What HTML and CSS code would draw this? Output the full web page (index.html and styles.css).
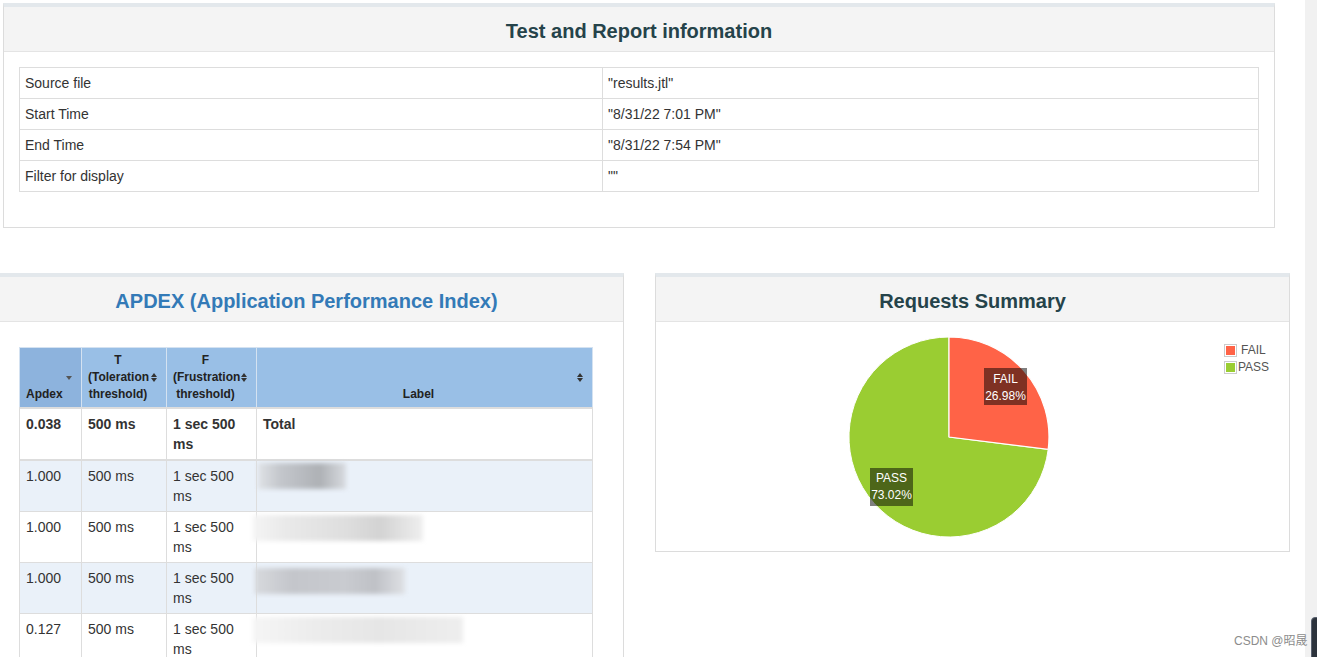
FILE: index.html
```html
<!DOCTYPE html>
<html>
<head>
<meta charset="utf-8">
<title>Dashboard</title>
<link rel="stylesheet" href="styles.css">
</head>
<body>
<div class="page">
  <div class="content">
    <section class="panel info-panel">
      <div class="panel-heading"><h2 class="title">Test and Report information</h2></div>
      <div class="panel-body info-body">
        <table class="info">
          <colgroup><col class="c-key"><col></colgroup>
          <tr><td>Source file</td><td>"results.jtl"</td></tr>
          <tr><td>Start Time</td><td>"8/31/22 7:01 PM"</td></tr>
          <tr><td>End Time</td><td>"8/31/22 7:54 PM"</td></tr>
          <tr><td>Filter for display</td><td>""</td></tr>
        </table>
      </div>
    </section>

    <div class="row">
      <section class="panel half">
        <div class="panel-heading"><h2 class="title title-link">APDEX (Application Performance Index)</h2></div>
        <div class="panel-body apdex-body">
          <table class="apdex">
            <colgroup><col class="c1"><col class="c2"><col class="c3"><col class="c4"></colgroup>
            <thead>
              <tr>
                <th class="sorted">Apdex<span class="sort-desc"></span></th>
                <th>T<br>(Toleration<br>threshold)<span class="sort-both"></span></th>
                <th>F<br>(Frustration<br>threshold)<span class="sort-both"></span></th>
                <th>Label<span class="sort-both"></span></th>
              </tr>
            </thead>
            <tbody class="total">
              <tr><td>0.038</td><td>500 ms</td><td>1 sec 500 ms</td><td>Total</td></tr>
            </tbody>
            <tbody class="rows">
              <tr class="odd"><td>1.000</td><td>500 ms</td><td>1 sec 500 ms</td><td><div class="smear s1"></div></td></tr>
              <tr><td>1.000</td><td>500 ms</td><td>1 sec 500 ms</td><td><div class="smear s2"></div></td></tr>
              <tr class="odd"><td>1.000</td><td>500 ms</td><td>1 sec 500 ms</td><td><div class="smear s3"></div></td></tr>
              <tr><td>0.127</td><td>500 ms</td><td>1 sec 500 ms</td><td><div class="smear s4"></div></td></tr>
            </tbody>
          </table>
        </div>
      </section>

      <section class="panel half">
        <div class="panel-heading"><h2 class="title">Requests Summary</h2></div>
        <div class="panel-body chart-body">
          <svg class="pie" width="633" height="229" viewBox="0 0 633 229" xmlns="http://www.w3.org/2000/svg">
            <path d="M293,115 L392.2,127.4 A100,100 0 1,1 293,15 Z" fill="#9acd32" stroke="#fff" stroke-width="1"/>
            <path d="M293,115 L293,15 A100,100 0 0,1 392.2,127.4 Z" fill="#ff6347" stroke="#fff" stroke-width="1.2"/>
            <rect x="328" y="46" width="43" height="37" fill="rgba(0,0,0,0.5)"/>
            <text class="plabel" x="349.5" y="60.5" text-anchor="middle">FAIL</text>
            <text class="plabel" x="349.5" y="77.5" text-anchor="middle">26.98%</text>
            <rect x="214" y="146" width="43" height="38" fill="rgba(0,0,0,0.5)"/>
            <text class="plabel" x="235.5" y="160" text-anchor="middle">PASS</text>
            <text class="plabel" x="235.5" y="177" text-anchor="middle">73.02%</text>
            <rect x="568.5" y="22.5" width="12" height="12" fill="#fff" stroke="#ccc"/>
            <rect x="570" y="24" width="9" height="9" fill="#ff6347"/>
            <text class="legend" x="585" y="32">FAIL</text>
            <rect x="568.5" y="39.5" width="12" height="12" fill="#fff" stroke="#ccc"/>
            <rect x="570" y="41" width="9" height="9" fill="#9acd32"/>
            <text class="legend" x="582" y="49">PASS</text>
          </svg>
        </div>
      </section>
    </div>
  </div>
  <div class="scrollbar"></div>
</div>
<div class="watermark">CSDN @昭晟</div>
<div class="corner"></div>
</body>
</html>
```

FILE: styles.css
```css
* { box-sizing: border-box; }
html, body { margin: 0; height: 100%; overflow: hidden; }
body {
  font-family: "Liberation Sans", Arial, sans-serif;
  font-size: 14px;
  line-height: 20px;
  color: #333;
  background: #fff;
  position: relative;
}
.page { display: flex; height: 657px; }
.content { flex: 1; overflow: hidden; padding-top: 3px; }
.scrollbar { width: 12px; flex: none; background: #f1f1f1; }

.panel {
  background: #fff;
  border: 1px solid #dcdcdc;
  border-top: 4px solid #e3e8ec;
}
.panel-heading {
  background: #f4f4f4;
  border-bottom: 1px solid #e4e4e4;
  padding: 12px 0 8px;
  text-align: center;
}
.title {
  margin: 0;
  font-size: 20px;
  line-height: 24px;
  font-weight: bold;
  color: #25434a;
}
.title-link { color: #337ab7; }

.info-panel { margin-left: 3px; width: 1272px; }
.info-body { padding: 15px 15px 35px; }
table { border-collapse: collapse; }
.info { width: 100%; table-layout: fixed; }
.info .c-key { width: 583px; }
.info td { border: 1px solid #ddd; padding: 5px; white-space: nowrap; }

.row {
  display: flex;
  align-items: flex-start;
  gap: 31px;
  margin-left: -11px;
  margin-top: 45px;
}
.half { width: 635px; flex: none; }
.apdex-body { padding: 25px 30px 0 29px; }
.chart-body { height: 229px; }
.pie { display: block; }

.apdex { width: 573px; table-layout: fixed; }
.apdex .c1 { width: 62px; }
.apdex .c2 { width: 85px; }
.apdex .c3 { width: 90px; }
.apdex .c4 { width: 336px; }
.apdex th {
  position: relative;
  background: #99bfe6;
  border: 1px solid #d4e2f1;
  border-bottom: 2px solid #ddd;
  padding: 4px 18px 4px 6px;
  font-size: 12px;
  line-height: 17px;
  font-weight: bold;
  color: #222;
  text-align: center;
  vertical-align: bottom;
}
.apdex th.sorted { background: #8db3dd; text-align: left; }
.sort-both, .sort-desc {
  position: absolute;
  right: 8px;
  top: 50%;
  width: 7px;
  height: 9px;
  margin-top: -5px;
}
.sort-both::before, .sort-both::after, .sort-desc::after {
  content: "";
  position: absolute;
  left: 0;
  border-left: 3.5px solid transparent;
  border-right: 3.5px solid transparent;
}
.sort-both::before { top: 0; border-bottom: 4px solid #333; }
.sort-both::after { bottom: 0; border-top: 4px solid #333; }
.sort-desc::after { top: 3px; border-top: 4px solid #555; }

.apdex td {
  border: 1px solid #ddd;
  padding: 5px 6px;
  vertical-align: top;
}
.apdex .total td { font-weight: bold; border-bottom: 2px solid #ddd; }
.apdex .rows tr.odd td { background: #eaf1f9; }
.apdex td .smear { height: 26px; filter: blur(2px); }
.smear.s1 {
  width: 88px; margin: -3px 0 0 -5px;
  background: linear-gradient(90deg, #dfe2e6 0, #c4c7cc 25%, #b8bbc0 50%, #aeb1b5 70%, #d8dbe0 100%);
}
.smear.s2 {
  width: 170px; margin: -2px 0 0 -10px; height: 30px;
  background: linear-gradient(90deg, #f4f4f4 0, #e9e9e9 20%, #dedede 55%, #d3d3d3 75%, #efefef 100%);
}
.smear.s3 {
  width: 150px; margin: 0 0 0 -8px; height: 20px;
  background: linear-gradient(90deg, #d7d9dd 0, #c4c6cb 25%, #c9cbd0 60%, #bfc1c6 80%, #dfe1e5 100%);
}
.smear.s4 {
  width: 210px; margin: -2px 0 0 -10px; height: 32px;
  background: linear-gradient(90deg, #f5f5f5 0, #ececec 30%, #e6e6e6 60%, #eeeeee 100%);
}

.plabel { font-family: "Liberation Sans", Arial, sans-serif; font-size: 12px; fill: #fff; }
.legend { font-family: "Liberation Sans", Arial, sans-serif; font-size: 12px; fill: #545454; }

.watermark {
  position: absolute;
  left: 1234px;
  top: 632px;
  font-family: "Liberation Sans", "Noto Sans CJK SC", sans-serif;
  font-size: 12px;
  line-height: 18px;
  color: #8c8c8c;
  text-shadow: 0 0 1px #fff;
}
.corner {
  position: absolute;
  left: 1311px;
  top: 617px;
  width: 10px;
  height: 45px;
  background: #2c333c;
  border: 1px solid #5a6270;
  border-radius: 4px 0 0 0;
}
```
